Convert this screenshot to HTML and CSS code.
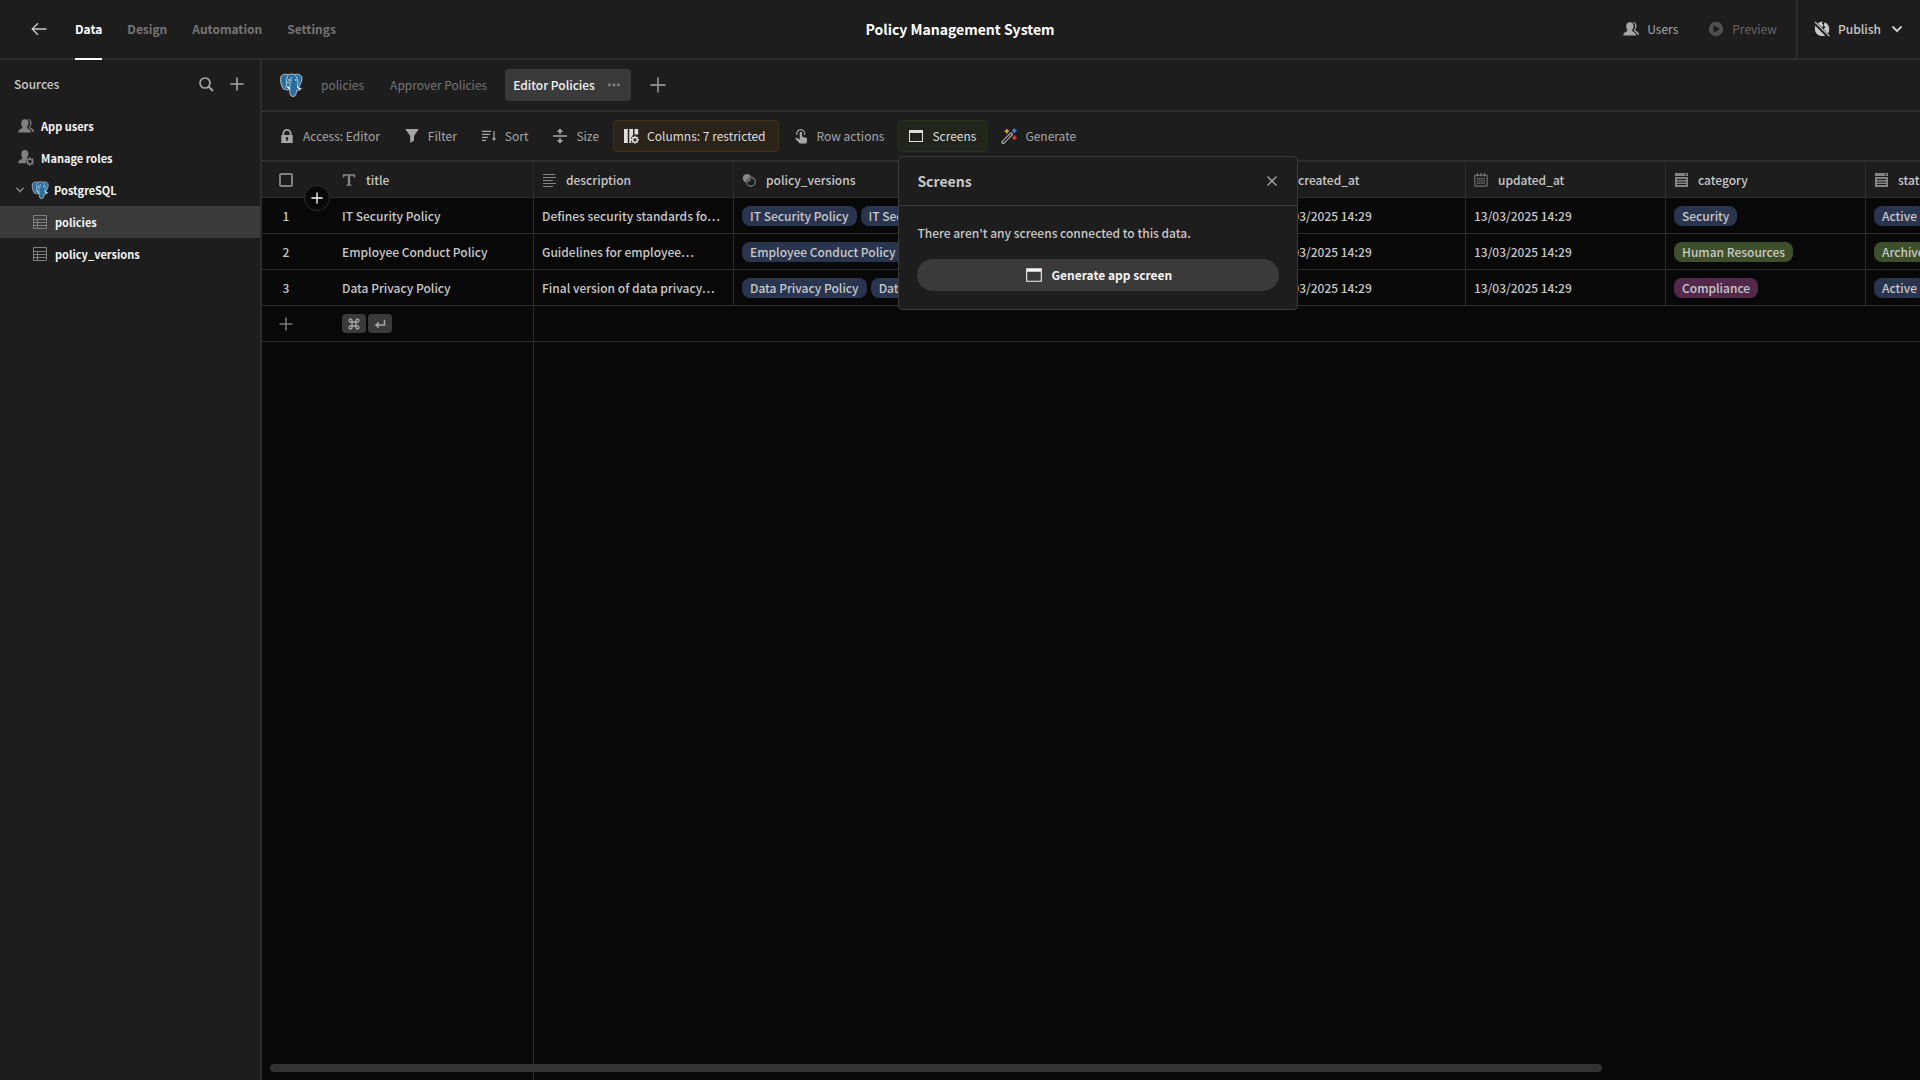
FILE: index.html
```html
<!DOCTYPE html>
<html lang="en">
<head>
<meta charset="utf-8">
<title>Policy Management System</title>
<link rel="stylesheet" href="styles.css">
</head>
<body>
<svg class="sprite" aria-hidden="true">
  <symbol id="i-back" viewBox="0 0 16 16"><path d="M15.500 8H1.500M7 2.200 1.200 8 7 13.800" fill="none" stroke="currentColor" stroke-width="1.400"/></symbol>
  <symbol id="i-search" viewBox="0 0 16 16"><circle cx="7" cy="7" r="5" fill="none" stroke="currentColor" stroke-width="1.700"/><path d="M10.600 10.600 15 15" stroke="currentColor" stroke-width="2"/></symbol>
  <symbol id="i-plus" viewBox="0 0 14 14"><path d="M7 1v12M1 7h12" stroke="currentColor" stroke-width="1.600" stroke-linecap="round"/></symbol>
  <symbol id="i-chevron" viewBox="0 0 12 12"><path d="m2 4 4 4 4-4" fill="none" stroke="currentColor" stroke-width="2" stroke-linecap="round"/></symbol>
  <symbol id="i-caret" viewBox="0 0 12 12"><path d="M2.800 4.300 6 7.500l3.200-3.200" fill="none" stroke="currentColor" stroke-width="1.600" stroke-linecap="round"/></symbol>
  <symbol id="i-users" viewBox="0 0 16 16"><path d="M10 1c2.300 0 3.700 1.700 3.500 4.200-.1 1.500-.8 2.500-1.400 3.300 0 1 .6 1.300 1.500 1.800 1.300.7 2.300 1.500 2.400 3.400h-2c-.4-1.500-1.500-2.400-2.900-3.100-.5-.3-.7-.7-.4-1.200 1-1.400 1.500-2.700 1.400-4.300C12 3.200 11.300 1.800 9.300 1.100z" fill="currentColor"/><path d="M7 1.300c2.400 0 3.800 1.600 3.700 4-.1 1.600-.7 2.600-1.400 3.600-.3 1 .2 1.300 1.200 1.800 1.700.8 2.500 1.700 2.600 3.900H.2c.1-2.200 1-3.100 2.800-3.900 1-.5 1.600-.8 1.300-1.800C3.600 7.900 3.200 6.900 3.200 5.300 3.200 2.900 4.600 1.300 7 1.300z" fill="currentColor"/><path d="M9.200 1.200c1.600.8 2.300 2.300 2.200 4.200-.1 1.600-.7 2.800-1.400 3.900-.2.600.2.900.9 1.200 1.800.9 2.700 2 2.900 3.900" fill="none" stroke="#1d1d1d" stroke-width=".7"/></symbol>
  <symbol id="i-roles" viewBox="0 0 16 16"><path d="M7 0c2.200 0 3.500 1.500 3.400 3.900-.1 1.500-.7 2.600-1.400 3.500-.1.700.1 1 .5 1.300C8 9.800 7.600 11.600 8 13.300H.3c.1-2.200 1-3.200 2.800-4 1-.4 1.400-.9 1.200-1.900-.7-.9-1-2-1-3.500C3.300 1.500 4.800 0 7 0z" fill="currentColor"/><circle cx="12" cy="11.500" r="2.400" fill="none" stroke="currentColor" stroke-width="1.300"/><path d="M12 7.300v1.800M12 13.900v1.800M7.900 11.500h1.700M14.400 11.500h1.700M9.100 8.600l1.200 1.200M13.700 13.200l1.200 1.200M14.900 8.600l-1.200 1.200M10.300 13.200l-1.200 1.200" stroke="currentColor" stroke-width="1.500"/></symbol>
  <symbol id="i-table" viewBox="0 0 16 16"><path d="M1.500 1.500h13v13h-13zM1.500 5.500h13M1.500 8.500h13M1.500 11.500h13M5.500 5.500v9" fill="none" stroke="currentColor"/></symbol>
  <symbol id="i-pg" viewBox="0 0 24 24"><path d="M2 3.500C3.500.8 7 1 9 1.700c2-.9 4.500-1 6.500-.1 2.500-.8 6-.5 7.200 2 .9 3-1 7.400-2.700 10l-.8 1.500c1.200.3 2.600 0 3.100.4-.4 1.500-2.800 2.200-4.600 1.800-.5 2.300-.4 5.400-2.700 6-2.400.6-3.800-.6-4-3l-.3-4.100c-1.400 1.200-3.100 1-4 .1-.7.400-1.700.4-2.400-.5C2.500 13.300.7 7 2 3.500z" fill="#2b6d9c" stroke="#d5e2ea" stroke-width=".8"/><path d="M9 2.500C7.500 5 7.200 8 7.600 10.500c.2 1.500-.6 2.400-.9 4M16.500 2.500c2 2.500 2.900 6 2.300 8.300-.3 1.800-.8 2.700.4 4M7.600 9.800c2-1.300 3.900-.6 3.600 1.300-.2 1.600-1.200 2.200-.3 3.900M12.500 4c-.6 2-.6 4-.2 5.500" fill="none" stroke="#d5e2ea" stroke-width=".8"/><path d="M8.300 13.500 11 16M18.600 14l2.600 2.300" stroke="#fff" stroke-width="1.300"/><circle cx="10.200" cy="7" r=".8" fill="#fff"/><circle cx="16.800" cy="7" r=".8" fill="#fff"/></symbol>
  <symbol id="i-preview" viewBox="0 0 16 16"><path fill-rule="evenodd" d="M8 .8a7.200 7.200 0 1 0 0 14.400A7.200 7.200 0 0 0 8 .8zM5.500 4.300 12 8l-6.500 3.700z" fill="currentColor"/></symbol>
  <symbol id="i-globe" viewBox="0 0 18 18"><path d="M1.300 5.200 12.600 16.500C6.500 18.500 1 14.300 1 9c0-1.300.1-2.500.3-3.800zM4.300 2.800C6.500.9 9 .8 10 1L8.800 3l1.700 1.200-1 3.300zM12 1.300c3.200 1.200 5.200 4.300 5.200 7.700 0 2-.6 3.700-1.500 5L10.800 9l2.200-2-2.200-2z" fill="currentColor"/><path d="m1 1 16.300 16" stroke="currentColor" stroke-width="1.500"/></symbol>
  <symbol id="i-lock" viewBox="0 0 16 16"><path fill-rule="evenodd" d="M3.500 7V5.500a4.500 4.500 0 0 1 9 0V7h1.200v8H2.300V7zM5.300 7h5.400V5.500a2.700 2.700 0 0 0-5.400 0zM8 9a1.300 1.300 0 0 0-.7 2.400V13h1.400v-1.600A1.300 1.300 0 0 0 8 9z" fill="currentColor"/></symbol>
  <symbol id="i-filter" viewBox="0 0 16 16"><path d="M1.300 1h13.400L10 8v4.500L6.200 15V8z" fill="currentColor"/></symbol>
  <symbol id="i-sort" viewBox="0 0 16 16"><path d="M1 3.300h9M1 6.300h8M1 9.300h6M1 12.300h4M13 3v9" stroke="currentColor" stroke-width="1.200"/><path d="M11 10h4l-2 3z" fill="currentColor"/></symbol>
  <symbol id="i-size" viewBox="0 0 16 16"><path d="M1 8h14M8 3v3M8 10v3" stroke="currentColor" stroke-width="1.600"/><path d="M4.800 4 8 .5 11.200 4zM4.800 12 8 15.500l3.200-3.500z" fill="currentColor"/></symbol>
  <symbol id="i-columns" viewBox="0 0 16 16"><path d="M1 1h3.800v14H1zM6.300 1H10v6l-1.800 2.500V15H6.300zM11.500 1h3.700v5.600h-3.700z" fill="currentColor"/><circle cx="12" cy="11.800" r="2.300" fill="none" stroke="currentColor" stroke-width="1.300"/><path d="M12 7.800v1.700M12 14.100v1.700M8 11.800h1.700M14.300 11.800H16M9.200 9l1.100 1.100M13.700 13.500l1.100 1.100M14.800 9l-1.100 1.100M10.300 13.500l-1.100 1.100" stroke="currentColor" stroke-width="1.400"/></symbol>
  <symbol id="i-tap" viewBox="0 0 16 16"><path d="M4 7A4 4 0 1 1 11.500 7" fill="none" stroke="currentColor" stroke-width="1.200"/><path d="M6.700 5a1.200 1.200 0 0 1 2.400 0v3.800l3.800 1c1 .3 1.300.8 1.200 1.700l-.7 4H6.800L2.500 11c-.5-1 .6-1.700 1.500-1l2.700 1.600z" fill="currentColor"/></symbol>
  <symbol id="i-screen" viewBox="0 0 16 16"><path fill-rule="evenodd" d="M1 2h14v12H1zM2 5v8h12V5z" fill="currentColor"/></symbol>
  <symbol id="i-wand" viewBox="0 0 18 18"><path d="m2.500 16 8.800-9" stroke="currentColor" stroke-width="4.200" stroke-linecap="round"/><path d="m2.800 15.700 6-6.200M10 8.300l1-1" stroke="#1d1d1d" stroke-width="1.500" stroke-linecap="round"/><path d="M6.500 1.200v5M4 3.700h5" stroke="#d9a83c" stroke-width="1.800"/><path d="M15 .5v5M12.500 3h5" stroke="#5b7fe0" stroke-width="1.800"/><path d="M15.200 8.500v5M12.700 11h5" stroke="#d84a4a" stroke-width="1.800"/></symbol>
  <symbol id="i-text" viewBox="0 0 16 16"><path d="M1 1.500h14V5.200h-1.400c-.2-1.300-.7-2-2-2H9.300v9c0 .9.400 1.200 1.700 1.300v1.200H5v-1.200c1.300-.1 1.700-.4 1.700-1.300v-9H4.400c-1.300 0-1.800.7-2 2H1z" fill="currentColor"/></symbol>
  <symbol id="i-long" viewBox="0 0 14 14"><path d="M1 1.500h12M1 4.500h13M1 7.500h10M1 10.500h13M1 13.500h10" stroke="currentColor"/></symbol>
  <symbol id="i-rel" viewBox="0 0 16 16"><circle cx="5.800" cy="6" r="4.900" fill="currentColor"/><circle cx="10.200" cy="10" r="5" fill="none" stroke="currentColor" stroke-width="1.200"/><path d="M5.800 10.800c0-3 2-5 4.700-5.200M7 12l4-6" fill="none" stroke="#1d1d1d" stroke-width="1"/></symbol>
  <symbol id="i-date" viewBox="0 0 16 16"><path d="M1 2.500h14v12.500H1zM4 0v4M8 0v4M12 0v4" fill="none" stroke="currentColor" stroke-width="1.100"/><path d="M3.500 6.500h9M3.500 9h9M3.500 11.500h9" stroke="currentColor" stroke-width="1.400" stroke-dasharray="1.600 .8"/></symbol>
  <symbol id="i-options" viewBox="0 0 14 14"><path fill-rule="evenodd" d="M1 0h13v3H1zM10 1l1.500 1.500L13 1zM1 4h13v10H1zM3 6v1h9V6zM3 8.500v1h9v-1zM3 11v1h9v-1z" fill="currentColor"/></symbol>
  <symbol id="i-close" viewBox="0 0 12 12"><path d="m1.500 1.500 9 9M10.500 1.500l-9 9" stroke="currentColor" stroke-width="1.400"/></symbol>
  <symbol id="i-more" viewBox="0 0 14 14"><circle cx="2.500" cy="7" r="1.400" fill="currentColor"/><circle cx="7" cy="7" r="1.400" fill="currentColor"/><circle cx="11.500" cy="7" r="1.400" fill="currentColor"/></symbol>
  <symbol id="i-cmd" viewBox="0 0 12 12"><path d="M4 4h4v4H4zM4 4V2.700A1.500 1.500 0 1 0 2.600 4zM8 4h1.400A1.500 1.500 0 1 0 8 2.600zM8 8v1.400A1.500 1.500 0 1 0 9.400 8zM4 8H2.600A1.500 1.500 0 1 0 4 9.400z" fill="none" stroke="currentColor" stroke-width="1.300"/></symbol>
  <symbol id="i-return" viewBox="0 0 12 12"><path d="M10.500 2v5H3" fill="none" stroke="currentColor" stroke-width="1.500"/><path d="M4.800 3.500v7L.8 7z" fill="currentColor"/></symbol>
</svg>

<div class="app">
  <header class="topbar">
    <div class="topbar-left">
      <button class="icon-btn back" aria-label="Back"><svg class="icon"><use href="#i-back"/></svg></button>
      <nav class="nav">
        <a class="nav-link is-active" href="#data">Data</a>
        <a class="nav-link" href="#design">Design</a>
        <a class="nav-link" href="#automation">Automation</a>
        <a class="nav-link" href="#settings">Settings</a>
      </nav>
    </div>
    <h1 class="app-title">Policy Management System</h1>
    <div class="topbar-right">
      <button class="top-btn"><svg class="icon"><use href="#i-users"/></svg>Users</button>
      <button class="top-btn" disabled><svg class="icon"><use href="#i-preview"/></svg>Preview</button>
      <button class="top-btn publish"><svg class="icon"><use href="#i-globe"/></svg>Publish<svg class="icon icon-s"><use href="#i-chevron"/></svg></button>
    </div>
  </header>

  <div class="body">
    <aside class="sidebar">
      <div class="sidebar-head">
        <h2 class="sidebar-title">Sources</h2>
        <button class="icon-btn" aria-label="Search"><svg class="icon"><use href="#i-search"/></svg></button>
        <button class="icon-btn" aria-label="Add source"><svg class="icon icon-m"><use href="#i-plus"/></svg></button>
      </div>
      <nav class="sources">
        <a class="source" href="#users"><svg class="icon"><use href="#i-users"/></svg>App users</a>
        <a class="source" href="#roles"><svg class="icon"><use href="#i-roles"/></svg>Manage roles</a>
        <a class="source source-db" href="#postgres"><svg class="icon icon-s"><use href="#i-caret"/></svg><svg class="icon icon-db"><use href="#i-pg"/></svg>PostgreSQL</a>
        <a class="source source-table is-selected" href="#policies"><svg class="icon"><use href="#i-table"/></svg>policies</a>
        <a class="source source-table" href="#policy_versions"><svg class="icon"><use href="#i-table"/></svg>policy_versions</a>
      </nav>
    </aside>

    <main class="main">
      <nav class="tabs">
        <svg class="icon icon-l"><use href="#i-pg"/></svg>
        <a class="tab" href="#t1">policies</a>
        <a class="tab" href="#t2">Approver Policies</a>
        <div class="tab is-active"><a href="#t3">Editor Policies</a><button class="icon-btn" aria-label="View options"><svg class="icon icon-m"><use href="#i-more"/></svg></button></div>
        <button class="icon-btn add-view" aria-label="Add view"><svg class="icon"><use href="#i-plus"/></svg></button>
      </nav>

      <div class="toolbar">
        <button class="tool"><svg class="icon"><use href="#i-lock"/></svg>Access: Editor</button>
        <button class="tool"><svg class="icon"><use href="#i-filter"/></svg>Filter</button>
        <button class="tool"><svg class="icon"><use href="#i-sort"/></svg>Sort</button>
        <button class="tool"><svg class="icon"><use href="#i-size"/></svg>Size</button>
        <button class="tool tool-warn"><svg class="icon"><use href="#i-columns"/></svg>Columns: 7 restricted</button>
        <button class="tool"><svg class="icon"><use href="#i-tap"/></svg>Row actions</button>
        <div class="tool-anchor">
          <button class="tool tool-on"><svg class="icon"><use href="#i-screen"/></svg>Screens</button>
          <section class="popover" role="dialog" aria-labelledby="pop-title">
            <header class="popover-head">
              <h2 class="popover-title" id="pop-title">Screens</h2>
              <button class="icon-btn" aria-label="Close"><svg class="icon icon-s"><use href="#i-close"/></svg></button>
            </header>
            <div class="popover-body">
              <p class="popover-text">There aren't any screens connected to this data.</p>
              <button class="cta"><svg class="icon"><use href="#i-screen"/></svg>Generate app screen</button>
            </div>
          </section>
        </div>
        <button class="tool"><svg class="icon"><use href="#i-wand"/></svg>Generate</button>
      </div>

      <div class="grid">
        <table class="table">
          <colgroup><col class="c-num"><col class="c-std"><col class="c-std"><col class="c-wide"><col class="c-std"><col class="c-std"><col class="c-std"><col class="c-std"></colgroup>
          <thead>
            <tr>
              <th class="num"><input class="check" type="checkbox" aria-label="Select all rows"></th>
              <th><span class="head"><svg class="icon icon-m"><use href="#i-text"/></svg>title</span></th>
              <th><span class="head"><svg class="icon icon-m"><use href="#i-long"/></svg>description</span></th>
              <th><span class="head"><svg class="icon icon-m"><use href="#i-rel"/></svg>policy_versions</span></th>
              <th><span class="head"><svg class="icon icon-m"><use href="#i-date"/></svg>created_at</span></th>
              <th><span class="head"><svg class="icon icon-m"><use href="#i-date"/></svg>updated_at</span></th>
              <th><span class="head"><svg class="icon icon-m"><use href="#i-options"/></svg>category</span></th>
              <th><span class="head"><svg class="icon icon-m"><use href="#i-options"/></svg>status</span></th>
            </tr>
          </thead>
          <tbody>
            <tr>
              <td class="num">1</td><td>IT Security Policy</td><td>Defines security standards fo…</td>
              <td><div class="pills"><span class="pill blue">IT Security Policy</span><span class="pill blue">IT Security Policy</span></div></td>
              <td>13/03/2025 14:29</td><td>13/03/2025 14:29</td>
              <td><div class="pills"><span class="pill blue">Security</span></div></td>
              <td><div class="pills"><span class="pill blue">Active</span></div></td>
            </tr>
            <tr>
              <td class="num">2</td><td>Employee Conduct Policy</td><td>Guidelines for employee…</td>
              <td><div class="pills"><span class="pill blue">Employee Conduct Policy</span></div></td>
              <td>13/03/2025 14:29</td><td>13/03/2025 14:29</td>
              <td><div class="pills"><span class="pill green">Human Resources</span></div></td>
              <td><div class="pills"><span class="pill green">Archived</span></div></td>
            </tr>
            <tr>
              <td class="num">3</td><td>Data Privacy Policy</td><td>Final version of data privacy…</td>
              <td><div class="pills"><span class="pill blue">Data Privacy Policy</span><span class="pill blue">Data Privacy Policy</span></div></td>
              <td>13/03/2025 14:29</td><td>13/03/2025 14:29</td>
              <td><div class="pills"><span class="pill purple">Compliance</span></div></td>
              <td><div class="pills"><span class="pill blue">Active</span></div></td>
            </tr>
            <tr class="new-row">
              <td class="num"><button class="icon-btn" aria-label="Add row"><svg class="icon icon-m"><use href="#i-plus"/></svg></button></td>
              <td><div class="pills keys"><kbd class="key"><svg class="icon icon-s"><use href="#i-cmd"/></svg></kbd><kbd class="key"><svg class="icon icon-s"><use href="#i-return"/></svg></kbd></div></td>
              <td></td><td></td><td></td><td></td><td></td><td></td>
            </tr>
          </tbody>
        </table>
        <button class="insert" aria-label="Insert row"><svg class="icon icon-s"><use href="#i-plus"/></svg></button>
        <div class="scrollbar"></div>
      </div>
    </main>
  </div>
</div>
</body>
</html>
```
FILE: styles.css
```css
:root {
  --bg: #1d1d1d;
  --canvas: #080808;
  --line: #2d2d2d;
  --raised: #3a3a3a;
  --text: #c8c8c8;
  --muted: #a6a6a6;
  --dim: #757575;
  --bright: #f4f4f4;
}

* { box-sizing: border-box; }

body {
  margin: 0;
  background: var(--bg);
  color: var(--text);
  font: 400 12px/20px "Noto Sans CJK SC", sans-serif;
}

h1, h2, p { margin: 0; }
a { color: inherit; text-decoration: none; }
button { margin: 0; padding: 0; border: 0; background: none; color: inherit; font: inherit; white-space: nowrap; }

.sprite { position: absolute; width: 0; height: 0; }
.icon { width: 16px; height: 16px; flex: none; display: block; }
.icon-s { width: 12px; height: 12px; }
.icon-m { width: 14px; height: 14px; }
.icon-l { width: 24px; height: 24px; }
.icon-btn { display: flex; align-items: center; color: var(--muted); }

.app { min-height: 100vh; display: flex; flex-direction: column; }

.topbar {
  height: 60px;
  display: grid;
  grid-template-columns: 1fr auto 1fr;
  align-items: stretch;
  border-bottom: 2px solid var(--line);
}
.topbar-left { display: flex; padding-left: 31px; gap: 28px; }
.back { color: var(--text); }
.nav { display: flex; gap: 25px; }
.nav-link {
  display: flex;
  align-items: center;
  margin-bottom: -2px;
  border-bottom: 2px solid transparent;
  color: var(--dim);
  font-weight: 700;
}
.nav-link.is-active { color: #fff; border-color: #fff; }
.app-title { align-self: center; color: #fff; font-size: 14px; font-weight: 700; }
.topbar-right { display: flex; justify-content: flex-end; }
.top-btn { display: flex; align-items: center; gap: 8px; margin-right: 30px; color: var(--muted); }
.top-btn:disabled { margin-right: 19px; color: #676767; }
.top-btn:disabled .icon { color: #4f4f4f; }
.top-btn.publish { margin: 0; padding: 0 17px 0 16px; border-left: 2px solid var(--line); color: var(--text); font-weight: 500; }
.publish .icon-s { margin-left: 2px; }

.body { flex: 1; display: flex; }

.sidebar { width: 262px; flex: none; border-right: 2px solid var(--line); }
.sidebar-head { height: 48px; display: flex; align-items: center; gap: 16px; padding: 0 16px 0 14px; }
.sidebar-title { flex: 1; font-size: 12px; font-weight: 500; }
.sources { padding-top: 2px; }
.source {
  height: 32px;
  display: flex;
  align-items: center;
  gap: 7px;
  padding-left: 18px;
  color: var(--bright);
  font-size: 11px;
  font-weight: 700;
}
.source .icon { color: #808080; }
.source .icon-db { width: 18px; height: 18px; }
.source-db { padding-left: 14px; gap: 5px; }
.source-table { padding-left: 32px; }
.source.is-selected { background: var(--raised); }

.main { flex: 1; min-width: 0; display: flex; flex-direction: column; }

.tabs { height: 52px; display: flex; align-items: center; gap: 10px; padding-left: 17px; border-bottom: 2px solid var(--line); }
.tab { height: 32px; display: flex; align-items: center; gap: 12px; padding: 0 8px; border-radius: 4px; color: var(--dim); }
.tab.is-active { padding-right: 10px; background: var(--raised); color: var(--bright); font-weight: 500; }
.tab .icon-btn { color: #868686; }
.add-view { margin-left: 9px; color: #8a8a8a; }

.toolbar { height: 50px; display: flex; align-items: center; gap: 4px; padding-left: 7px; border-bottom: 2px solid var(--line); }
.tool {
  height: 32px;
  display: flex;
  align-items: center;
  gap: 8px;
  padding: 0 9px;
  border: 1px solid transparent;
  border-radius: 4px;
  color: var(--muted);
}
.tool-warn { padding-right: 12px; background: #29231a; border-color: #3e3217; color: #dedede; }
.tool-on { padding-right: 10px; background: #20241a; border-color: #2a311c; color: #dedede; }
.tool-anchor { position: relative; }

.popover {
  position: absolute;
  z-index: 5;
  top: 36px;
  left: 0;
  width: 400px;
  border: 1px solid #3a3a3a;
  border-radius: 4px;
  background: var(--bg);
}
.popover-head { height: 49px; display: flex; align-items: center; justify-content: space-between; padding: 0 19px 0 18px; border-bottom: 1px solid #3a3a3a; }
.popover-title { font-size: 14px; font-weight: 700; }
.popover-body { display: grid; gap: 18px; padding: 18px; }
.popover-text { line-height: 17px; font-weight: 500; }
.cta {
  height: 32px;
  display: flex;
  align-items: center;
  justify-content: center;
  gap: 9px;
  border-radius: 16px;
  background: var(--raised);
  color: var(--bright);
  font-weight: 700;
}
.cta .icon { width: 18px; height: 18px; }

.grid { position: relative; flex: 1; overflow: hidden; background: var(--canvas); }
.grid::after { content: ""; position: absolute; top: 0; bottom: 0; left: 271px; width: 1px; background: var(--line); }

.table { width: 1804px; table-layout: fixed; border-spacing: 0; font-weight: 500; }
.c-num { width: 72px; }
.c-std { width: 200px; }
.c-wide { width: 532px; }
.table th, .table td {
  height: 36px;
  padding: 0 8px;
  border-right: 1px solid var(--line);
  border-bottom: 1px solid var(--line);
  text-align: left;
  font-weight: 500;
  white-space: nowrap;
  overflow: hidden;
}
.table th { background: var(--bg); }
.table .num { border-right: 0; padding: 0 32px 0 8px; text-align: center; }
.num .check, .num .icon-btn { margin: 0 auto; }
.table .new-row td { border-right: 0; }
.new-row .icon-btn { color: var(--dim); }
.head { display: flex; align-items: center; gap: 10px; }
.head .icon { color: #858585; }
.check { display: block; appearance: none; width: 14px; height: 14px; border: 2px solid #808080; border-radius: 2px; }

.pills { display: flex; gap: 4px; }
.pills.keys { gap: 2px; }
.pill { padding: 0 8px; border-radius: 8px; }
.blue { background: #29344f; }
.green { background: #3e4f2b; }
.purple { background: #52294b; }
.key { height: 19px; display: flex; align-items: center; padding: 0 6px; border-radius: 4px; background: var(--raised); color: var(--muted); }

.insert {
  position: absolute;
  top: 23px;
  left: 42px;
  width: 26px;
  height: 26px;
  display: flex;
  align-items: center;
  justify-content: center;
  border: 1px solid var(--line);
  border-radius: 50%;
  background: var(--canvas);
  color: var(--bright);
}
.scrollbar { position: absolute; z-index: 1; left: 8px; right: 318px; bottom: 8px; height: 8px; border-radius: 4px; background: #333; }
```
